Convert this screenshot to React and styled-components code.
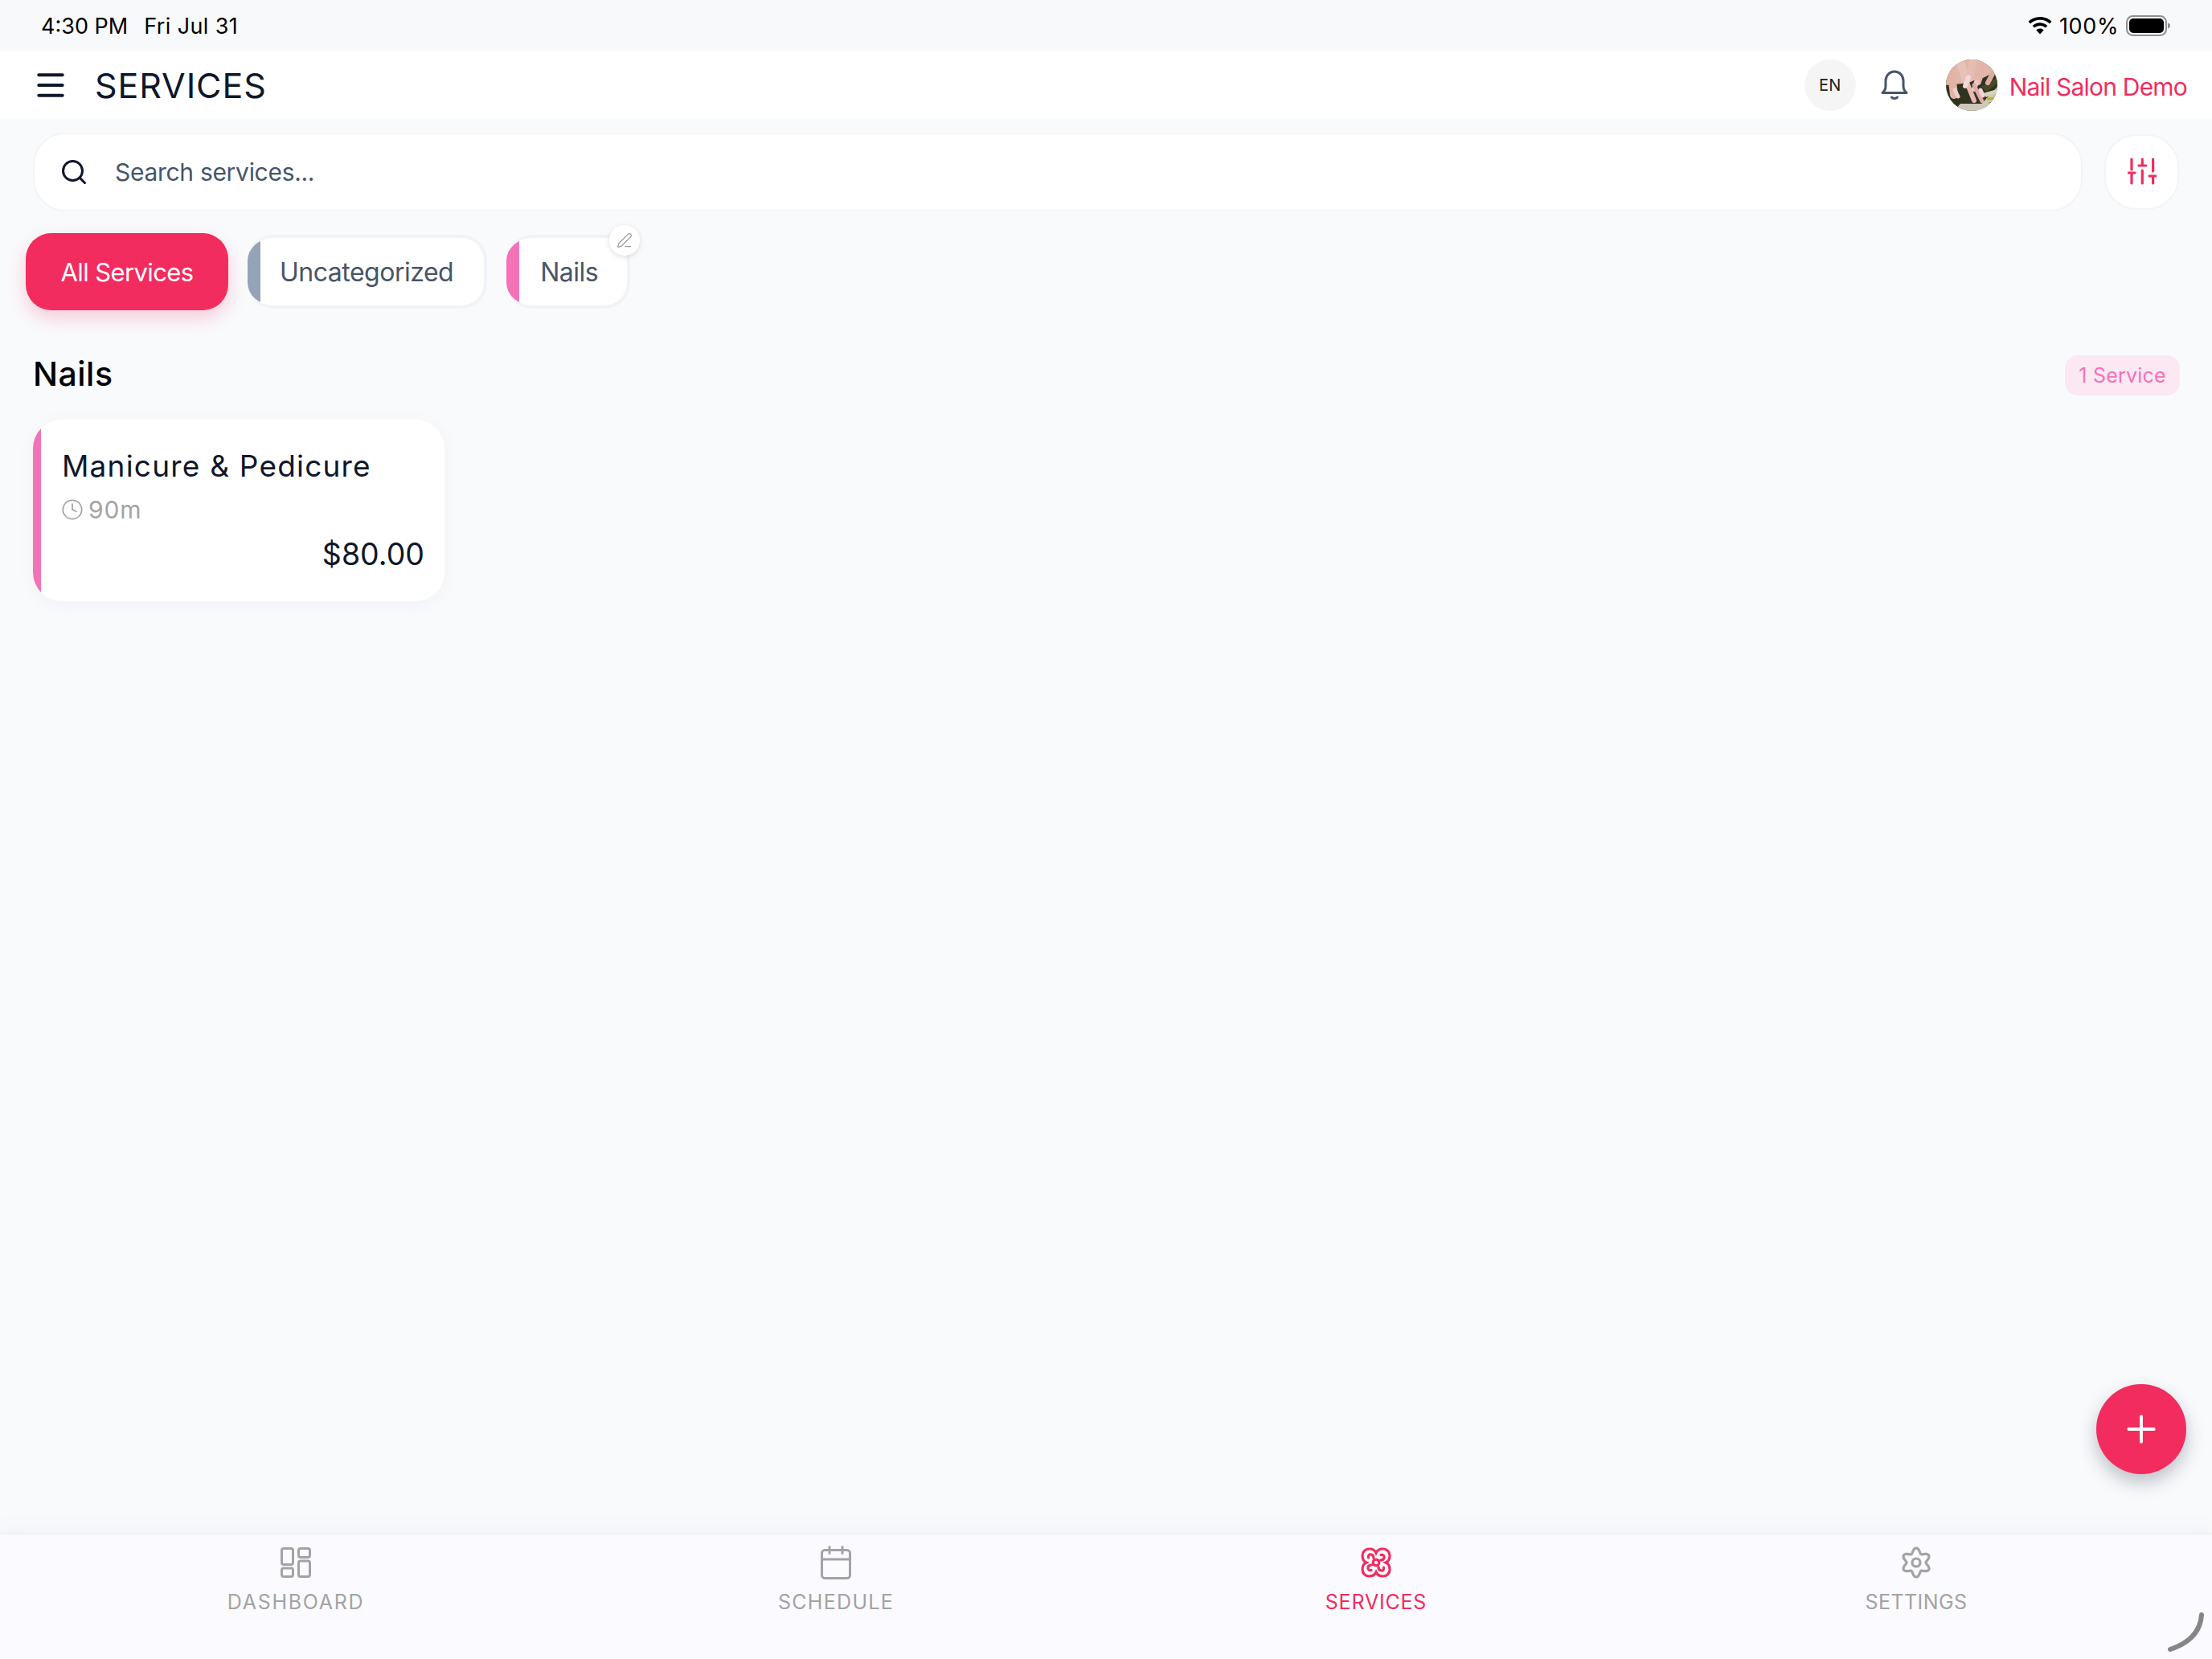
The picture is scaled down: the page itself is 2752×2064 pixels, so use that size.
import React from "react";
import styled, { createGlobalStyle } from "styled-components";
import { Menu, Search, Clock, PenLine, Plus } from "lucide-react";

const GlobalStyle = createGlobalStyle`
  html, body {
    margin: 0;
    padding: 0;
    background: #f9fafc;
  }
  * {
    box-sizing: border-box;
  }
`;

const PINK = "#f22c5e";
const ROSE = "#f472b6";
const GREY = "#a3a3a3";

const navItems = [
  { label: "DASHBOARD", Icon: DashboardIcon, track: 1.7 },
  { label: "SCHEDULE", Icon: CalendarIcon, track: 1.3 },
  { label: "SERVICES", Icon: ServicesIcon, track: 0.8, active: true },
  { label: "SETTINGS", Icon: SettingsIcon, track: 0.4 },
];

// six rounded lobes around the centre
function gearPath() {
  const points = [];
  for (let i = 0; i < 120; i++) {
    const a = (i / 120) * Math.PI * 2;
    const r = 15 + 3 * Math.cos(6 * a);
    points.push(`${(20 + r * Math.sin(a)).toFixed(2)} ${(20 - r * Math.cos(a)).toFixed(2)}`);
  }
  return `M${points.join("L")}z`;
}

function DashboardIcon() {
  return (
    <svg width="38" height="38" viewBox="0 0 38 38" fill="none" stroke="currentColor" strokeWidth="3">
      <rect x="1.5" y="1.5" width="14" height="20" rx="2.5" />
      <rect x="22.5" y="1.5" width="14" height="11" rx="2.5" />
      <rect x="1.5" y="26" width="14" height="10.5" rx="2.5" />
      <rect x="22.5" y="17" width="14" height="19.5" rx="2.5" />
    </svg>
  );
}

function CalendarIcon() {
  return (
    <svg width="38" height="42" viewBox="0 0 38 42" fill="none" stroke="currentColor" strokeWidth="3" strokeLinecap="round">
      <rect x="1.5" y="5.5" width="35" height="35" rx="4" />
      <path d="M1.5 17h35M11 1.5v8M27 1.5v8" />
    </svg>
  );
}

function ServicesIcon() {
  return (
    <svg width="38" height="38" viewBox="0 0 38 38" fill="none" stroke="currentColor" strokeWidth="3.2" strokeLinecap="round">
      <path d="M19 7C17.500 3.500 14 2 10.500 2 5.500 2 2 5.500 2 10.500 2 14 3.500 17.500 7 19 3.500 20.500 2 24 2 27.500 2 32.500 5.500 36 10.500 36 14 36 17.500 34.500 19 31 20.500 34.500 24 36 27.500 36 32.500 36 36 32.500 36 27.500 36 24 34.500 20.500 31 19 34.500 17.500 36 14 36 10.500 36 5.500 32.500 2 27.500 2 24 2 20.500 3.500 19 7z" />
      {[0, 90, 180, 270].map((deg) => (
        <path key={deg} d="M9.500 13c-.5-3 1-4.500 3.500-4 2 .5 3 2.500 3 4.500" transform={`rotate(${deg} 19 19)`} />
      ))}
      <circle cx="19" cy="19" r="3.800" />
    </svg>
  );
}

function SettingsIcon() {
  return (
    <svg width="40" height="40" viewBox="0 0 40 40" fill="none" stroke="currentColor" strokeWidth="3.2" strokeLinejoin="round">
      <path d={gearPath()} />
      <circle cx="20" cy="20" r="5" />
    </svg>
  );
}

function FilterIcon() {
  return (
    <svg width="36" height="34" viewBox="0 0 36 34" fill="none" stroke="currentColor" strokeWidth="3.2" strokeLinecap="round">
      <path d="M5 2v13M5 19v13M1 19h8" />
      <path d="M18.300 2v8M18.300 16v16M14 10h8.600" />
      <path d="M31.600 2v15M31.600 23v9M27 23h8.600" />
    </svg>
  );
}

function BellIcon() {
  return (
    <svg width="34" height="38" viewBox="0 0 34 38" fill="none" stroke="#475569" strokeWidth="3" strokeLinecap="round" strokeLinejoin="round">
      <path d="M2 28.500h30c-2.500-2-4-4.500-4-8.500v-6.500C28 7 23 2 17 2S6 7 6 13.500V20c0 4-1.500 6.500-4 8.500z" />
      <path d="M13.500 34c1.500 2 5.500 2 7 0" />
    </svg>
  );
}

function WifiIcon() {
  return (
    <svg width="30" height="22" viewBox="0 0 30 22" fill="#000">
      <path d="M15 0c5.600 0 10.700 2.200 14.500 5.800L27 8.400C23.900 5.500 19.700 3.700 15 3.700S6.100 5.500 3 8.400L.5 5.800C4.300 2.200 9.400 0 15 0z" />
      <path d="M15 7.300c3.600 0 6.900 1.400 9.400 3.700l-2.600 2.600C20 12 17.600 11 15 11s-5 1-6.800 2.600L5.600 11c2.500-2.300 5.800-3.700 9.400-3.700z" />
      <path d="M15 14.500c1.800 0 3.500.7 4.700 1.900L15 21.500l-4.700-5.100c1.200-1.200 2.900-1.900 4.700-1.900z" />
    </svg>
  );
}

function BatteryIcon() {
  return (
    <svg width="55" height="26" viewBox="0 0 55 26">
      <rect x="1" y="1" width="49" height="24" rx="7.500" fill="none" stroke="#8e8e93" strokeWidth="2" />
      <rect x="4" y="4" width="43" height="18" rx="5" fill="#000" />
      <path d="M52 9.500c1.800.6 3 1.900 3 3.500s-1.200 2.900-3 3.500z" fill="#8e8e93" />
    </svg>
  );
}

// rough drawing of the nail photo: fingers over a striped cloth
function AvatarArt() {
  return (
    <svg width="64" height="64" viewBox="0 0 64 64">
      <defs>
        <clipPath id="avatarClip">
          <circle cx="32" cy="32" r="32" />
        </clipPath>
      </defs>
      <g clipPath="url(#avatarClip)">
        <rect width="64" height="64" fill="#2f3320" />
        <path d="M36 64L64 34v30z" fill="#cfcab4" />
        <path d="M44 34l20-12v8L50 40z" fill="#454a26" />
        <path d="M46 42l18-5v4L50 47z" fill="#d8d3b4" />
        <path d="M50 48l14-2v3L52 51z" fill="#b7ad35" />
        <path d="M52 54l12-2v3z" fill="#4a4b22" />
        <path d="M10 64h44v-9H18z" fill="#cdc8ba" />
        <path d="M0 0h64v14L44 24 20 30 0 32z" fill="#e0b8aa" />
        <g fill="none" strokeLinecap="round">
          <path d="M5 2l5 42" stroke="#e0b3a5" strokeWidth="10" />
          <path d="M17 0l8 26" stroke="#e8c2b6" strokeWidth="10" />
          <path d="M34 0L29 24" stroke="#e6bdb0" strokeWidth="9" />
          <path d="M47 4L40 28" stroke="#e3b5a8" strokeWidth="8" />
          <path d="M60 14l-8 15" stroke="#dcaea2" strokeWidth="6" />
          <path d="M11 38l4 8" stroke="#eecfca" strokeWidth="5" />
          <path d="M25 26l10 25" stroke="#e8b9b3" strokeWidth="6" />
          <path d="M28 22l-4 11" stroke="#f3d8da" strokeWidth="6" />
          <path d="M38 28l-3 9" stroke="#eec6c6" strokeWidth="6" />
          <path d="M35 32l10 20" stroke="#e2aca6" strokeWidth="5" />
          <path d="M43 38l3 7" stroke="#f0d4d8" strokeWidth="5" />
        </g>
      </g>
    </svg>
  );
}

const Page = styled.div`
  width: 2752px;
  height: 2064px;
  display: flex;
  flex-direction: column;
  position: relative;
  overflow: hidden;
  background: #f9fafc;
  font-family: Inter, "Liberation Sans", sans-serif;
`;

const StatusBar = styled.div`
  height: 64px;
  flex: none;
  display: flex;
  align-items: center;
  justify-content: space-between;
  padding: 0 52px 0 51px;
  background: #f8f9fb;
  color: #000;
  font-size: 27px;
`;

const StatusGroup = styled.div`
  display: flex;
  align-items: center;
  gap: ${(p) => p.$gap}px;
`;

const StatusDate = styled.span`
  letter-spacing: 0.4px;
`;

const BatteryText = styled.span`
  letter-spacing: 0.6px;
`;

const Header = styled.header`
  height: 84px;
  flex: none;
  display: flex;
  align-items: center;
  background: #fff;
  padding: 0 31px 0 41px;
`;

const MenuButton = styled.div`
  display: flex;
  color: #0f172a;
  margin-right: 33px;
`;

const Title = styled.h1`
  margin: 0;
  flex: 1;
  font-size: 43px;
  font-weight: 400;
  letter-spacing: 0.9px;
  color: #0f172a;
`;

const LangBadge = styled.div`
  width: 64px;
  height: 64px;
  border-radius: 50%;
  background: #f5f5f5;
  color: #222;
  font-size: 20px;
  display: flex;
  align-items: center;
  justify-content: center;
  margin-right: 31px;
`;

const BellSlot = styled.div`
  display: flex;
  margin-right: 47px;
`;

const Avatar = styled.div`
  width: 64px;
  height: 64px;
  display: flex;
  margin-right: 15px;
`;

const SalonName = styled.div`
  font-size: 30px;
  color: ${PINK};
  letter-spacing: -0.8px;
  padding-top: 4px;
`;

const Main = styled.main`
  flex: 1;
  min-height: 0;
  display: flex;
  flex-direction: column;
`;

const SearchRow = styled.div`
  display: flex;
  align-items: center;
  gap: 27px;
  padding: 17px 41px 0;
`;

const SearchBox = styled.div`
  flex: 1;
  height: 98px;
  display: flex;
  align-items: center;
  gap: 33px;
  padding-left: 31px;
  background: #fff;
  border: 2px solid #f3f4f6;
  border-radius: 40px;
  color: #0f172a;
`;

const SearchText = styled.span`
  font-size: 30px;
  letter-spacing: -0.3px;
  color: #475569;
`;

const FilterButton = styled.div`
  width: 93px;
  height: 94px;
  display: flex;
  align-items: center;
  justify-content: center;
  padding-bottom: 2px;
  background: #fff;
  border: 2px solid #f3f4f6;
  border-radius: 40px;
  color: ${PINK};
`;

const ChipRow = styled.div`
  display: flex;
  align-items: center;
  gap: 24px;
  padding: 27px 32px 0;
`;

const ActiveChip = styled.div`
  width: 252px;
  height: 96px;
  display: flex;
  align-items: center;
  justify-content: center;
  border-radius: 32px;
  background: ${PINK};
  color: #fff;
  font-size: 31px;
  letter-spacing: -0.6px;
  box-shadow: 0 10px 22px rgba(242, 44, 94, 0.22);
`;

const Chip = styled.div`
  position: relative;
  height: 92px;
  display: flex;
  align-items: center;
  padding: 0 ${(p) => p.$right}px 0 ${(p) => p.$left}px;
  background: linear-gradient(90deg, ${(p) => p.$color} 16px, #fff 16px) padding-box;
  border: 4px solid #f1f3f9;
  border-left: 0;
  border-radius: 32px;
  color: #475569;
  font-size: 32px;
  letter-spacing: -0.5px;
`;

const EditBadge = styled.div`
  position: absolute;
  top: -16px;
  right: -16px;
  width: 38px;
  height: 38px;
  border-radius: 50%;
  background: #fff;
  color: #9a9a9a;
  display: flex;
  align-items: center;
  justify-content: center;
  box-shadow: 0 2px 6px rgba(100, 116, 139, 0.22);
`;

const SectionHead = styled.div`
  display: flex;
  align-items: center;
  justify-content: space-between;
  padding: 56px 40px 0 41px;
`;

const SectionTitle = styled.h2`
  margin: 0 0 3px;
  font-size: 41px;
  line-height: 47px;
  font-weight: 500;
  letter-spacing: 0.5px;
  color: #000;
`;

const CountBadge = styled.div`
  width: 143px;
  height: 50px;
  border-radius: 16px;
  background: #fbe8f3;
  color: ${ROSE};
  font-size: 25px;
  letter-spacing: 0.2px;
  display: flex;
  align-items: center;
  justify-content: center;
`;

const CardGrid = styled.div`
  display: grid;
  grid-template-columns: repeat(5, 512px);
  padding: 30px 41px 0;
`;

const Card = styled.div`
  height: 226px;
  display: flex;
  flex-direction: column;
  padding: 35px 25px 0 36px;
  background: linear-gradient(90deg, ${ROSE} 10px, #fff 10px);
  border-radius: 36px;
  box-shadow: 0 4px 20px rgba(100, 116, 139, 0.06);
`;

const CardTitle = styled.div`
  font-size: 37px;
  letter-spacing: 1.2px;
  color: #0f172a;
`;

const CardMeta = styled.div`
  display: flex;
  align-items: center;
  gap: 6px;
  margin: 14px 0 0 -1px;
  color: ${GREY};
  font-size: 30px;
  letter-spacing: 0.8px;
`;

const CardPrice = styled.div`
  margin-top: 15px;
  text-align: right;
  font-size: 37.5px;
  color: #0f172a;
`;

const Fab = styled.div`
  position: absolute;
  left: 2608px;
  top: 1722px;
  width: 112px;
  height: 112px;
  border-radius: 50%;
  background: ${PINK};
  color: #fff;
  display: flex;
  align-items: center;
  justify-content: center;
  box-shadow: 0 10px 22px rgba(30, 41, 59, 0.28);
`;

const BottomNav = styled.nav`
  height: 157px;
  flex: none;
  display: grid;
  grid-template-columns: repeat(4, 1fr);
  padding: 0 32px;
  background: #fafaff;
  border-top: 2px solid #eff0f3;
  box-shadow: 0 -10px 20px rgba(120, 120, 130, 0.035);
`;

const NavItem = styled.div`
  display: flex;
  flex-direction: column;
  align-items: center;
  padding-top: 14px;
  color: ${(p) => (p.$active ? PINK : GREY)};
`;

const NavIconSlot = styled.div`
  height: 42px;
  display: flex;
  align-items: center;
`;

const NavLabel = styled.div`
  margin-top: 13px;
  font-size: 25px;
  letter-spacing: ${(p) => p.$track}px;
`;

const PencilMark = styled.svg`
  position: absolute;
  right: 10px;
  bottom: 8px;
`;

export default function App() {
  return (
    <Page>
      <GlobalStyle />
      <StatusBar>
        <StatusGroup $gap={20}>
          <span>4:30 PM</span>
          <StatusDate>Fri Jul 31</StatusDate>
        </StatusGroup>
        <StatusGroup $gap={9}>
          <WifiIcon />
          <BatteryText>100%</BatteryText>
          <BatteryIcon />
        </StatusGroup>
      </StatusBar>
      <Header>
        <MenuButton>
          <Menu size={44} strokeWidth={2.2} />
        </MenuButton>
        <Title>SERVICES</Title>
        <LangBadge>EN</LangBadge>
        <BellSlot>
          <BellIcon />
        </BellSlot>
        <Avatar>
          <AvatarArt />
        </Avatar>
        <SalonName>Nail Salon Demo</SalonName>
      </Header>
      <Main>
        <SearchRow>
          <SearchBox>
            <Search size={36} strokeWidth={2} />
            <SearchText>Search services...</SearchText>
          </SearchBox>
          <FilterButton>
            <FilterIcon />
          </FilterButton>
        </SearchRow>
        <ChipRow>
          <ActiveChip>All Services</ActiveChip>
          <Chip $color="#94a3b8" $left={40} $right={38}>Uncategorized</Chip>
          <Chip $color={ROSE} $left={42} $right={36}>
            Nails
            <EditBadge>
              <PenLine size={20} strokeWidth={1.5} />
            </EditBadge>
          </Chip>
        </ChipRow>
        <SectionHead>
          <SectionTitle>Nails</SectionTitle>
          <CountBadge>1 Service</CountBadge>
        </SectionHead>
        <CardGrid>
          <Card>
            <CardTitle>Manicure &amp; Pedicure</CardTitle>
            <CardMeta>
              <Clock size={28} strokeWidth={1.5} />
              90m
            </CardMeta>
            <CardPrice>$80.00</CardPrice>
          </Card>
        </CardGrid>
      </Main>
      <Fab>
        <Plus size={54} strokeWidth={1.7} />
      </Fab>
      <BottomNav>
        {navItems.map(({ label, Icon, active, track }) => (
          <NavItem key={label} $active={active}>
            <NavIconSlot>
              <Icon />
            </NavIconSlot>
            <NavLabel $track={track}>{label}</NavLabel>
          </NavItem>
        ))}
      </BottomNav>
      <PencilMark width="46" height="50" viewBox="0 0 46 50" fill="none">
        <path d="M43 3c-1 16-9 33-39 43" stroke="#868686" strokeWidth="6" strokeLinecap="round" />
      </PencilMark>
    </Page>
  );
}
